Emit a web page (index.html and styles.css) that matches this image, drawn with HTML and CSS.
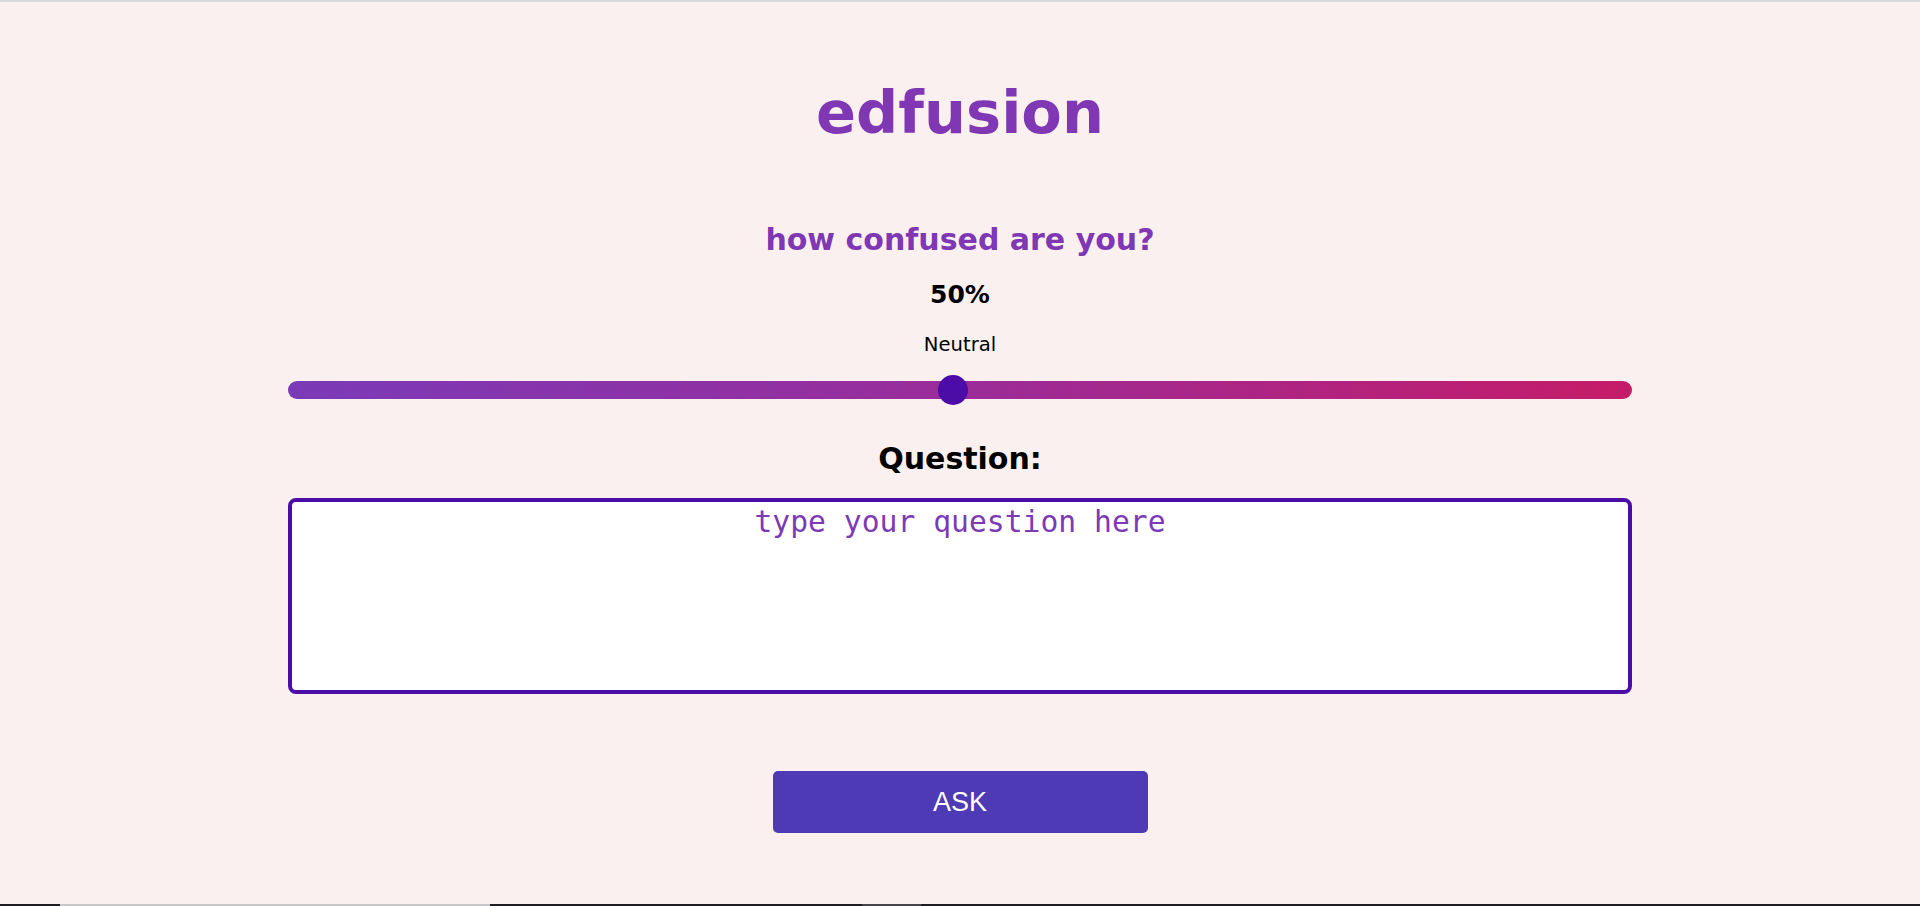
FILE: index.html
```html
<!DOCTYPE html>
<html lang="en">
<head>
<meta charset="utf-8">
<title>edfusion</title>
<link rel="stylesheet" href="styles.css">
</head>
<body>
<div class="topline"></div>
<main class="page">
  <h1 class="title">edfusion</h1>
  <h2 class="prompt">how confused are you?</h2>
  <div class="percent">50%</div>
  <div class="mood">Neutral</div>
  <input class="slider" type="range" min="0" max="100" value="50">
  <h3 class="qlabel">Question:</h3>
  <textarea class="question" placeholder="type your question here"></textarea>
  <button class="ask" type="button">ASK</button>
</main>
<div class="taskbar">
  <span class="tb-dark tb-a"></span>
  <span class="tb-light"></span>
  <span class="tb-dark tb-b"></span>
  <span class="tb-gray"></span>
  <span class="tb-dark tb-c"></span>
</div>
</body>
</html>
```

FILE: styles.css
```css
html, body {
  margin: 0;
  padding: 0;
  height: 100%;
}
body {
  background: #faf0ef;
  font-family: "DejaVu Sans", Verdana, sans-serif;
  display: flex;
  flex-direction: column;
  overflow: hidden;
}
.topline {
  height: 2px;
  background: #d9d9de;
  flex: none;
}
.page {
  flex: 1;
  display: flex;
  flex-direction: column;
  align-items: center;
}
.title {
  margin: 76px 0 0;
  font-size: 59px;
  line-height: 70px;
  font-weight: bold;
  color: #7f37b4;
}
.prompt {
  margin: 74px 0 0;
  font-size: 30px;
  line-height: 36px;
  font-weight: bold;
  color: #7f37b4;
}
.percent {
  margin-top: 22px;
  font-size: 25px;
  line-height: 30px;
  font-weight: bold;
  color: #000;
}
.mood {
  margin-top: 23px;
  font-size: 19.6px;
  line-height: 24px;
  color: #000;
}
.slider {
  -webkit-appearance: none;
  appearance: none;
  margin: 18px 0 0;
  width: 70%;
  height: 30px;
  background: transparent;
  padding: 0;
}
.slider::-webkit-slider-runnable-track {
  height: 18px;
  border-radius: 9px;
  background: linear-gradient(to right, #7b3ab7, #9a2c99 50%, #c51c68);
}
.slider::-webkit-slider-thumb {
  -webkit-appearance: none;
  appearance: none;
  width: 30px;
  height: 30px;
  border-radius: 50%;
  background: #4b0ca8;
  margin-top: -6px;
  border: none;
  transform: translateX(-7px);
}
.qlabel {
  margin: 36px 0 0;
  font-size: 30px;
  line-height: 36px;
  font-weight: bold;
  color: #000;
}
.question {
  margin-top: 21px;
  width: 70%;
  height: 196px;
  box-sizing: border-box;
  border: 4px solid #4b0ca8;
  border-radius: 8px;
  background: #fff;
  padding: 2px;
  font-family: "DejaVu Sans Mono", monospace;
  font-size: 29.7px;
  text-align: center;
  resize: none;
  outline: none;
}
.question::placeholder {
  color: #7c3ab6;
  opacity: 1;
}
.ask {
  margin-top: 77px;
  width: 375px;
  height: 62px;
  border: none;
  border-radius: 5px;
  background: #4e3ab5;
  color: #fff;
  font-family: "Liberation Sans", Arial, sans-serif;
  font-size: 27px;
  cursor: pointer;
}
.taskbar {
  height: 2px;
  flex: none;
  display: flex;
}
.taskbar span {
  display: block;
  height: 100%;
}
.tb-dark { background: #1e1f24; }
.tb-a { width: 60px; }
.tb-light { width: 430px; background: #c8c8c8; }
.tb-b { width: 372px; }
.tb-gray { width: 59px; background: #45464c; }
.tb-c { flex: 1; }
```
